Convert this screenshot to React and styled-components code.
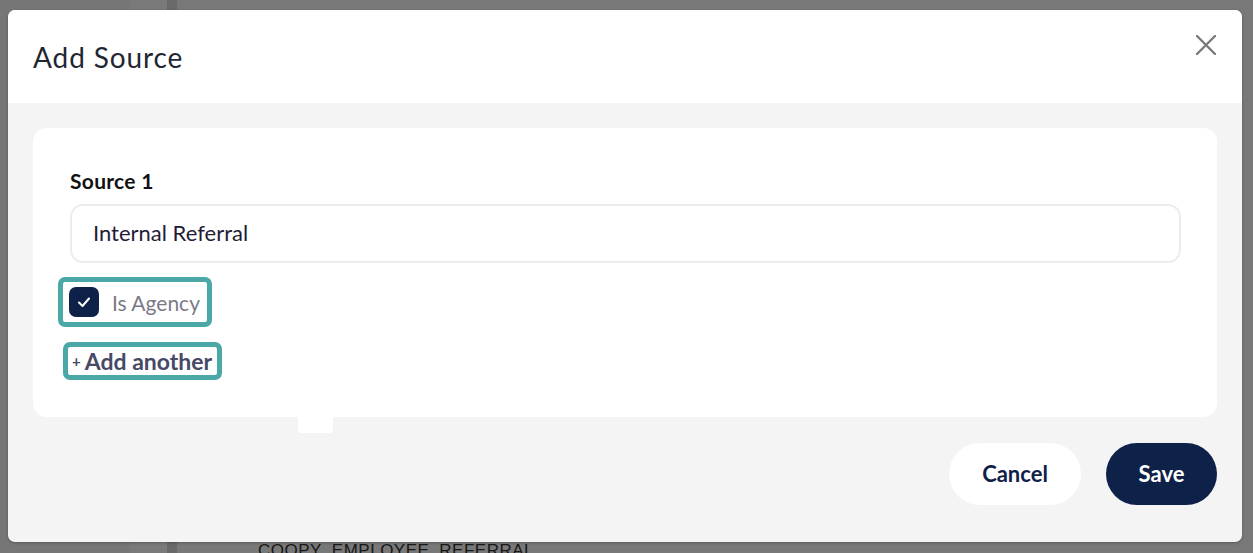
import React from "react";
import styled, { createGlobalStyle } from "styled-components";

const Global = createGlobalStyle`
  html, body { margin: 0; padding: 0; }
  body { font-family: Lato, "Open Sans", sans-serif; background: #7b7b7b; }
  * { box-sizing: border-box; }
`;

const Screen = styled.div`
  position: relative;
  width: 1253px;
  height: 553px;
  overflow: hidden;
  background: #ffffff;
`;

const Backdrop = styled.div`
  height: 100%;
  display: grid;
  grid-template-columns: 130px 37px 10px 1fr;
  grid-template-rows: 1fr;
`;

const BackCol = styled.div`
  background: ${(p) => p.$bg};
`;

const BackMain = styled.div`
  display: flex;
  flex-direction: column;
  justify-content: flex-end;
  padding: 0 0 0 81px;
  background: #fafafa;
`;

const BackText = styled.div`
  font-family: "Liberation Sans", Arial, sans-serif;
  font-size: 17px;
  line-height: 20px;
  letter-spacing: 0.5px;
  color: #333;
  transform: translateY(8px);
`;

const Overlay = styled.div`
  position: absolute;
  inset: 0;
  background: rgba(0, 0, 0, 0.52);
  padding: 10px 11px 11px 8px;
  display: flex;
`;

const Modal = styled.div`
  flex: 1;
  display: flex;
  flex-direction: column;
  border-radius: 7px;
  overflow: hidden;
  background: #f4f4f4;
  box-shadow: 0 1px 3px rgba(0, 0, 0, 0.25);
`;

const Header = styled.div`
  height: 93px;
  background: #ffffff;
  display: flex;
  align-items: flex-start;
  justify-content: space-between;
  padding: 27px 26px 0 25px;
`;

const Title = styled.h2`
  margin: 0;
  font-family: Lato, sans-serif;
  font-weight: 400;
  font-size: 28px;
  line-height: 40px;
  color: #1f2733;
  letter-spacing: 0.9px;
`;

const CloseButton = styled.button`
  border: none;
  background: none;
  padding: 0;
  margin-top: -2px;
  width: 20px;
  height: 20px;
  display: flex;
  cursor: pointer;
`;

const Body = styled.div`
  flex: 1;
  display: flex;
  flex-direction: column;
  padding: 25px 25px 37px 25px;
`;

const Card = styled.div`
  height: 289px;
  background: #ffffff;
  border-radius: 14px;
  padding: 40px 36px 0 37px;
  display: flex;
  flex-direction: column;
  align-items: flex-start;
`;

const Tab = styled.div`
  width: 35px;
  height: 16px;
  margin-left: 265px;
  background: #ffffff;
  border-radius: 0 0 3px 3px;
`;

const Label = styled.label`
  font-family: Lato, sans-serif;
  font-weight: 700;
  font-size: 21px;
  line-height: 26px;
  letter-spacing: 0.3px;
  color: #121212;
`;

const Input = styled.div`
  margin-top: 10px;
  width: 100%;
  height: 59px;
  border: 2px solid #ececec;
  border-radius: 13px;
  display: flex;
  align-items: center;
  padding: 0 21px 2px;
  font-size: 22px;
  color: #241c35;
`;

const FocusRing = styled.div`
  border: 5px solid #4aa8a6;
  border-radius: 7px;
  background: #fff;
  display: inline-flex;
  align-items: center;
  margin-left: ${(p) => p.$ml}px;
  margin-top: ${(p) => p.$mt}px;
  padding: ${(p) => p.$pad};
`;

const Box = styled.span`
  width: 30px;
  height: 30px;
  border-radius: 7px;
  background: #0e2148;
  display: flex;
  align-items: center;
  justify-content: center;
`;

const CheckText = styled.span`
  margin-left: 13px;
  font-size: 21px;
  font-weight: 400;
  color: #7a7a86;
`;

const AddText = styled.span`
  font-size: 23px;
  font-weight: 700;
  color: #464a66;
  line-height: 26px;
  display: flex;
  align-items: center;
  gap: 4px;
`;

const Plus = styled.span`
  font-size: 15px;
`;

const Footer = styled.div`
  margin-top: 10px;
  display: flex;
  justify-content: flex-end;
  gap: 25px;
`;

const Button = styled.button`
  height: 62px;
  padding: 0 30px 2px;
  min-width: ${(p) => (p.$primary ? 111 : 132)}px;
  border: none;
  border-radius: 31px;
  background: ${(p) => (p.$primary ? "#0e2148" : "#ffffff")};
  color: ${(p) => (p.$primary ? "#ffffff" : "#0e2148")};
  font-family: Lato, sans-serif;
  font-weight: 700;
  font-size: 22px;
  cursor: pointer;
`;

export default function App() {
  return (
    <>
      <Global />
      <Screen>
        <Backdrop>
          <BackCol $bg="#f7f7f7" />
          <BackCol $bg="#ffffff" />
          <BackCol $bg="#dcdcdc" />
          <BackMain>
            <BackText>COOPY_EMPLOYEE_REFERRAL</BackText>
          </BackMain>
        </Backdrop>
        <Overlay>
          <Modal>
            <Header>
              <Title>Add Source</Title>
              <CloseButton aria-label="Close">
                <svg width="20" height="20" viewBox="0 0 20 20">
                  <path d="M1 1L19 19M19 1L1 19" stroke="#7a7a7a" strokeWidth="2.4" strokeLinecap="round" />
                </svg>
              </CloseButton>
            </Header>
            <Body>
              <Card>
                <Label>Source 1</Label>
                <Input>Internal Referral</Input>
                <FocusRing $ml={-12} $mt={14} $pad="5px 7px 5px 6px">
                  <Box>
                    <svg width="16" height="16" viewBox="0 0 16 16">
                      <path d="M3 8.5L6.5 12L13 4.5" fill="none" stroke="#fff" strokeWidth="2" strokeLinecap="round" strokeLinejoin="round" />
                    </svg>
                  </Box>
                  <CheckText>Is Agency</CheckText>
                </FocusRing>
                <FocusRing $ml={-7} $mt={15} $pad="1px 5px 1px 4px">
                  <AddText>
                    <Plus>+</Plus>Add another
                  </AddText>
                </FocusRing>
              </Card>
              <Tab />
              <Footer>
                <Button>Cancel</Button>
                <Button $primary>Save</Button>
              </Footer>
            </Body>
          </Modal>
        </Overlay>
      </Screen>
    </>
  );
}
